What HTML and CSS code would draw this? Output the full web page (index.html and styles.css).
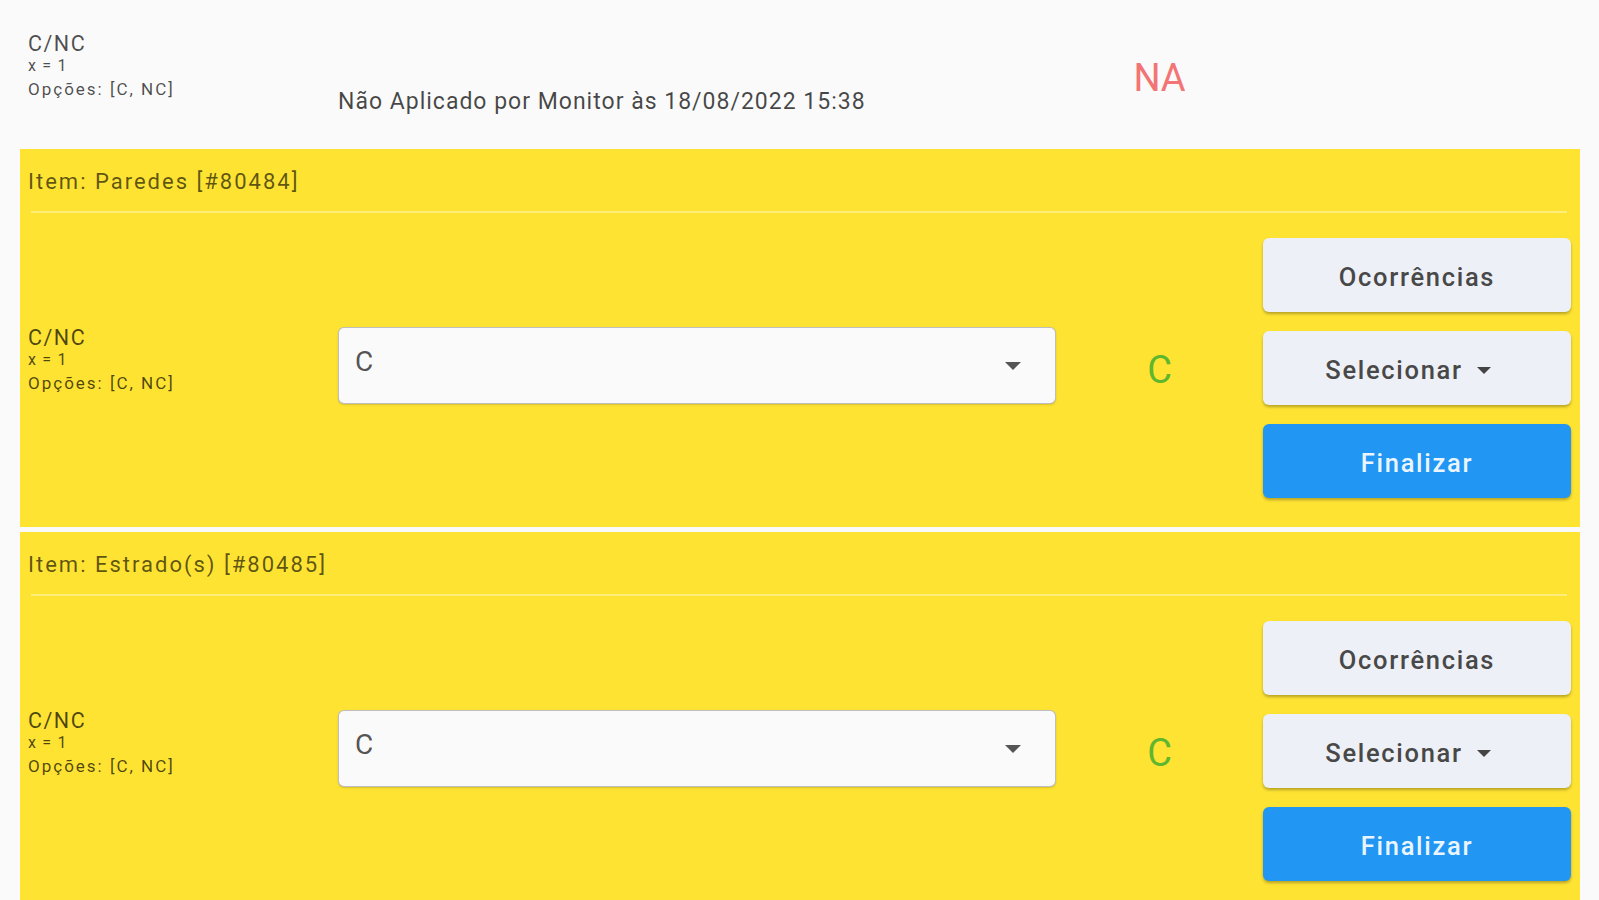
FILE: index.html
```html
<!DOCTYPE html>
<html lang="pt-BR">
<head>
<meta charset="utf-8">
<title>Checklist</title>
<link rel="stylesheet" href="styles.css">
</head>
<body>
<div class="page">
  <div class="row-top">
    <div class="label-col label-top">
      <div class="lbl-title">C/NC</div>
      <div class="lbl-sub">x = 1</div>
      <div class="lbl-opts">Opções: [C, NC]</div>
    </div>
    <div class="mid-col">
      <div class="note">Não Aplicado por Monitor às 18/08/2022 15:38</div>
    </div>
    <div class="res-col">
      <div class="result result-na">NA</div>
    </div>
  </div>

  <div class="cards">
    <section class="card">
      <div class="card-head">Item: Paredes [#80484]</div>
      <div class="card-divider"></div>
      <div class="card-body">
        <div class="label-col label-card">
          <div class="lbl-title">C/NC</div>
          <div class="lbl-sub">x = 1</div>
          <div class="lbl-opts">Opções: [C, NC]</div>
        </div>
        <div class="mid-col">
          <div class="dropdown">
            <span class="dd-value">C</span>
            <span class="dd-arrow"></span>
          </div>
        </div>
        <div class="res-col">
          <div class="result result-ok">C</div>
        </div>
        <div class="btn-col">
          <button class="btn btn-light">Ocorrências</button>
          <button class="btn btn-light btn-menu">Selecionar<span class="btn-caret"></span></button>
          <button class="btn btn-primary">Finalizar</button>
        </div>
      </div>
    </section>

    <section class="card">
      <div class="card-head">Item: Estrado(s) [#80485]</div>
      <div class="card-divider"></div>
      <div class="card-body">
        <div class="label-col label-card">
          <div class="lbl-title">C/NC</div>
          <div class="lbl-sub">x = 1</div>
          <div class="lbl-opts">Opções: [C, NC]</div>
        </div>
        <div class="mid-col">
          <div class="dropdown">
            <span class="dd-value">C</span>
            <span class="dd-arrow"></span>
          </div>
        </div>
        <div class="res-col">
          <div class="result result-ok">C</div>
        </div>
        <div class="btn-col">
          <button class="btn btn-light">Ocorrências</button>
          <button class="btn btn-light btn-menu">Selecionar<span class="btn-caret"></span></button>
          <button class="btn btn-primary">Finalizar</button>
        </div>
      </div>
    </section>
  </div>
</div>
</body>
</html>
```

FILE: styles.css
```css
* { box-sizing: border-box; }

html, body {
  margin: 0;
  padding: 0;
  background: #fafafa;
  font-family: Roboto, "Liberation Sans", sans-serif;
  color: rgba(0, 0, 0, 0.7);
  overflow: hidden;
  height: 900px;
}

.page {
  padding: 0 19px 0 20px;
}

/* shared columns */
.label-col {
  width: 310px;
  flex: none;
  display: flex;
  flex-direction: column;
}
.mid-col {
  width: 718px;
  flex: none;
}
.res-col {
  width: 207px;
  flex: none;
  display: flex;
  justify-content: center;
}

.lbl-title {
  font-size: 21.5px;
  line-height: 22px;
  letter-spacing: 1.5px;
}
.lbl-sub {
  font-size: 16px;
  line-height: 21px;
  letter-spacing: 1.2px;
}
.lbl-opts {
  font-size: 17px;
  line-height: 24px;
  letter-spacing: 2px;
  margin-top: 1px;
}

/* top (not applicable) row */
.row-top {
  height: 149px;
  display: flex;
  align-items: flex-start;
  padding-left: 8px;
}
.label-top {
  margin-top: 33px;
}
.note {
  margin-top: 88px;
  font-size: 23px;
  line-height: 28px;
  letter-spacing: 1px;
  color: rgba(0, 0, 0, 0.72);
}
.row-top .res-col {
  margin-top: 56px;
}

.result {
  font-size: 38px;
  line-height: 44px;
  font-weight: 400;
}
.result-na { color: #f27474; }
.result-ok { color: #5fb62f; }

/* cards */
.cards {
  display: flex;
  flex-direction: column;
  gap: 5px;
}
.card {
  background: #fee333;
}
.card-head {
  height: 62px;
  display: flex;
  align-items: center;
  padding-left: 8px;
  padding-top: 3px;
  font-size: 22px;
  letter-spacing: 2px;
  color: rgba(0, 0, 0, 0.64);
}
.card-divider {
  height: 2px;
  margin: 0 13px 0 11px;
  background: rgba(255, 255, 255, 0.35);
}
.card-body {
  height: 314px;
  display: flex;
  align-items: center;
  padding: 0 9px 0 8px;
}
.label-card {
  margin-bottom: 18px;
}

.dropdown {
  height: 77px;
  margin-bottom: 9px;
  background: #fafafa;
  border: 1px solid rgba(0, 0, 0, 0.24);
  border-radius: 6px;
  box-shadow: 0 1px 2px rgba(0, 0, 0, 0.15);
  display: flex;
  align-items: center;
  justify-content: space-between;
  padding: 0 34px 8px 16px;
}
.dd-value {
  font-size: 28px;
  color: rgba(0, 0, 0, 0.68);
}
.dd-arrow {
  width: 0;
  height: 0;
  border-left: 8px solid transparent;
  border-right: 8px solid transparent;
  border-top: 8px solid #555;
  margin-top: 8px;
}

.btn-col {
  width: 308px;
  flex: none;
  display: flex;
  flex-direction: column;
  gap: 19px;
  margin-bottom: 4px;
}
.btn {
  height: 74px;
  border: none;
  border-radius: 6px;
  font-family: Roboto, "Liberation Sans", sans-serif;
  font-size: 25.5px;
  font-weight: 500;
  letter-spacing: 1.7px;
  padding: 4px 0 0;
  display: flex;
  align-items: center;
  justify-content: center;
  box-shadow: 0 2px 3px rgba(0, 0, 0, 0.28);
}
.btn-light {
  background: #edf0f6;
  color: #484848;
}
.btn-menu {
  padding-right: 18px;
}
.btn-primary {
  background: #2196f3;
  color: #eaf5ff;
}
.btn-caret {
  width: 0;
  height: 0;
  border-left: 7px solid transparent;
  border-right: 7px solid transparent;
  border-top: 7px solid #444;
  margin-left: 14px;
}
```
